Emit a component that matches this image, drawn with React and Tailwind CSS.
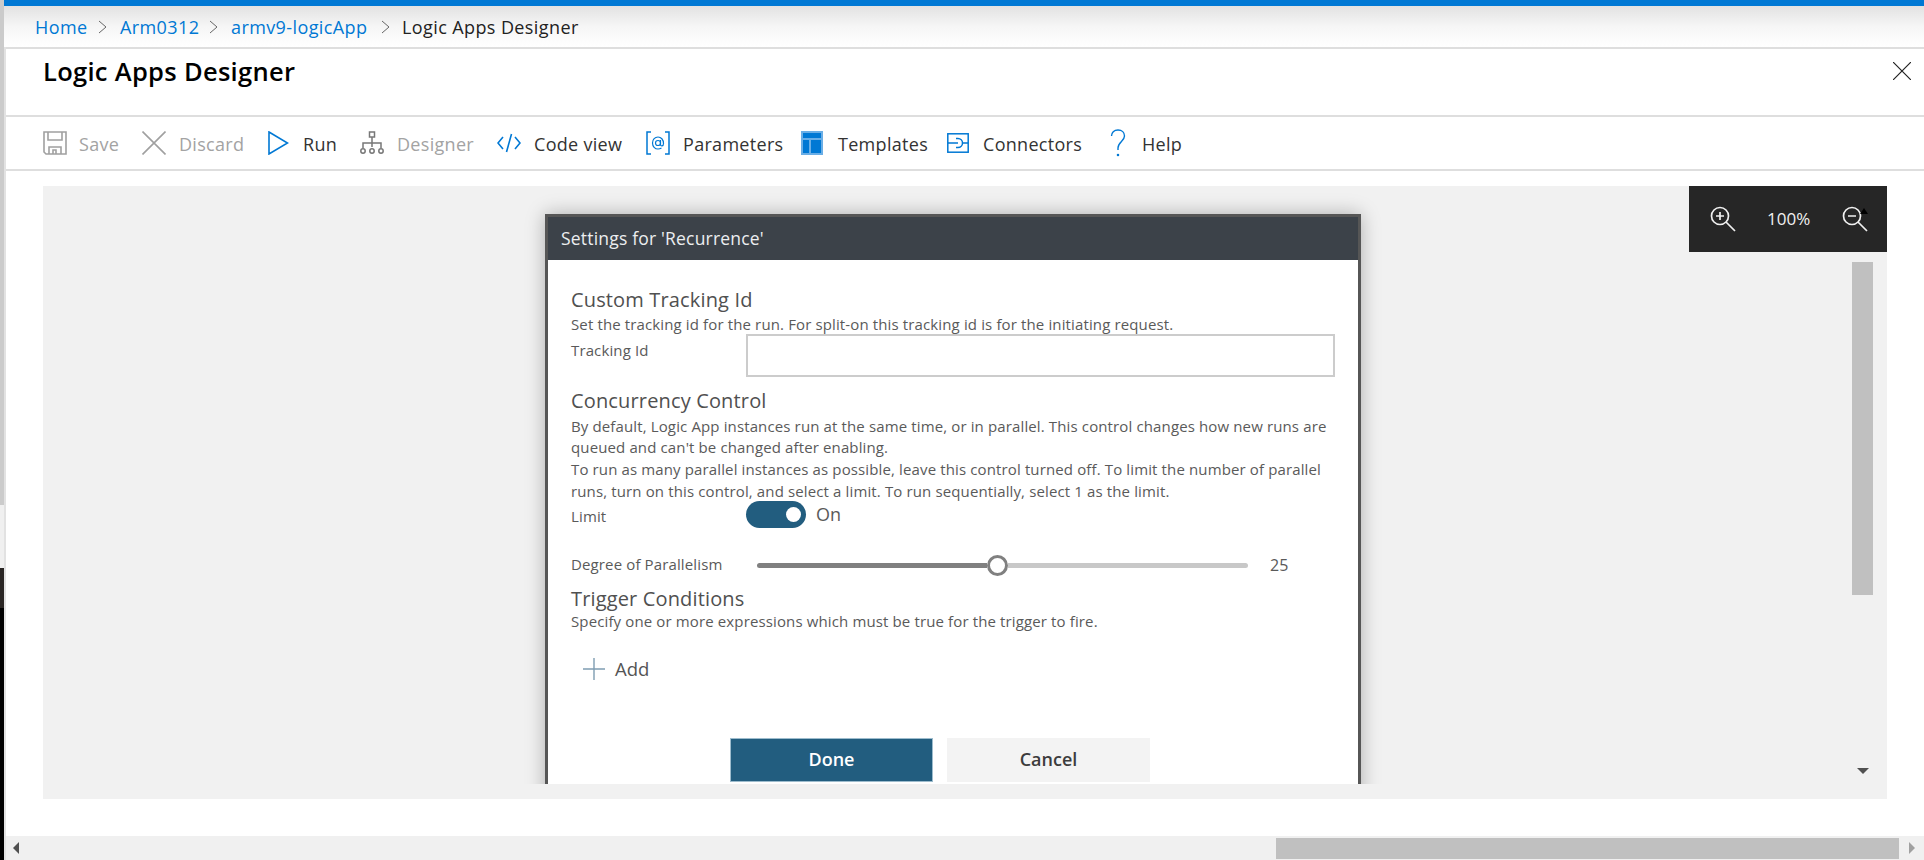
import React from "react";

const font = "font-['Open_Sans','Noto_Sans',sans-serif]";

const Chevron = () => (
  <svg width="9" height="14" viewBox="0 0 9 14" fill="none" stroke="#666" strokeWidth="1">
    <path d="M1 1l7 6-7 6" />
  </svg>
);

const SaveIcon = () => (
  <svg width="24" height="24" viewBox="0 0 24 24" fill="none" stroke="#a0a0a0" strokeWidth="1.6">
    <path d="M1 1h22v22H3l-2-2z" />
    <path d="M5 1v8h14V1M6 23v-7h12v7M10 23v-4h3v4" />
  </svg>
);

const DiscardIcon = () => (
  <svg width="24" height="24" viewBox="0 0 24 24" fill="none" stroke="#a0a0a0" strokeWidth="1.6">
    <path d="M0.5 0.5l23 23M23.500 0.5l-23 23" />
  </svg>
);

const RunIcon = () => (
  <svg width="21" height="24" viewBox="0 0 21 24" fill="none" stroke="#0078d4" strokeWidth="1.6">
    <path d="M1 1l18.500 11L1 23z" />
  </svg>
);

const DesignerIcon = () => (
  <svg width="24" height="24" viewBox="0 0 24 24" fill="none" stroke="#777" strokeWidth="1.500">
    <rect x="9.500" y="1" width="5" height="5" />
    <path d="M12 6v10M3 17v-5h18v5" />
    <circle cx="3" cy="20" r="2.200" />
    <circle cx="12" cy="20" r="2.200" />
    <circle cx="21" cy="20" r="2.200" />
  </svg>
);

const CodeIcon = () => (
  <svg width="24" height="24" viewBox="0 0 24 24" fill="none" stroke="#0078d4" strokeWidth="1.600">
    <path d="M6 6l-5 6 5 6M18 6l5 6-5 6M14.500 3l-5 18" />
  </svg>
);

const ParamsIcon = () => (
  <svg width="24" height="24" viewBox="0 0 24 24" fill="none" stroke="#0078d4" strokeWidth="1.500">
    <path d="M5 1H1v22h4M19 1h4v22h-4" />
    <circle cx="12" cy="12" r="2.500" strokeWidth="1.200" />
    <path d="M14.500 9v4.500c0 2 3 2 3-1 0-4-2.500-6.500-5.500-6.500s-5.500 2.500-5.500 6 2.500 6 5.500 6c1.500 0 2.500-.4 3.500-1" strokeWidth="1.200" />
  </svg>
);

const TemplatesIcon = () => (
  <svg width="22" height="24" viewBox="0 0 22 24">
    <rect x="0" y="0" width="22" height="24" fill="#6aaee6" />
    <rect x="2" y="2" width="18" height="5" fill="#0078d4" />
    <rect x="2" y="9" width="6" height="13" fill="#0078d4" />
    <rect x="10" y="9" width="10" height="13" fill="#0078d4" />
  </svg>
);

const ConnectorsIcon = () => (
  <svg width="22" height="20" viewBox="0 0 22 20" fill="none" stroke="#0078d4" strokeWidth="1.500">
    <rect x="0.800" y="0.800" width="20.400" height="18.400" />
    <path d="M1 10h10M9 5.500h2a4.500 4.500 0 0 1 0 9H9M21 10h-5.500" />
  </svg>
);

const HelpIcon = () => (
  <svg width="16" height="28" viewBox="0 0 16 28" fill="none" stroke="#0078d4" strokeWidth="1.400">
    <path d="M1.500 7C1.500 3.500 4 1 8 1s6.500 2.500 6.500 6c0 5-6.500 6-6.500 12v2" />
    <circle cx="8" cy="26" r="0.600" fill="#0078d4" />
  </svg>
);

const ZoomIcon = ({ minus }) => (
  <svg width="26" height="26" viewBox="0 0 26 26" fill="none" stroke="#f0f0f0" strokeWidth="1.700">
    <circle cx="10" cy="10" r="8.500" />
    <path d="M16 16l9 9M6 10h8" />
    {!minus && <path d="M10 6v8" />}
  </svg>
);

const tools = [
  { icon: <SaveIcon />, label: "Save", off: true, w: "w-[37px]", gap: "mr-[26px]", iconGap: "mr-[12px]" },
  { icon: <DiscardIcon />, label: "Discard", off: true, w: "w-[62px]", gap: "mr-[27px]", iconGap: "mr-[13px]" },
  { icon: <RunIcon />, label: "Run", w: "w-[33px]", gap: "mr-[24px]", iconGap: "mr-[14px]" },
  { icon: <DesignerIcon />, label: "Designer", off: true, w: "w-[75px]", gap: "mr-[25px]", iconGap: "mr-[13px]" },
  { icon: <CodeIcon />, label: "Code view", w: "w-[88px]", gap: "mr-[24px]", iconGap: "mr-[13px]" },
  { icon: <ParamsIcon />, label: "Parameters", w: "w-[94px]", gap: "mr-[24px]", iconGap: "mr-[13px]" },
  { icon: <TemplatesIcon />, label: "Templates", w: "w-[85px]", gap: "mr-[24px]", iconGap: "mr-[15px]" },
  { icon: <ConnectorsIcon />, label: "Connectors", w: "w-[98px]", gap: "mr-[29px]", iconGap: "mr-[14px]" },
  { icon: <HelpIcon />, label: "Help", w: "w-[39px]", gap: "", iconGap: "mr-[16px]" },
];

const SectionTitle = ({ children, className = "" }) => (
  <div className={`text-[20px] leading-[28px] mb-[-2px] tracking-[0.15px] text-[#505050] ${className}`}>{children}</div>
);

const Small = ({ children, className = "" }) => (
  <div className={`text-[15px] leading-[21.500px] tracking-[0.13px] text-[#5a5a5a] whitespace-nowrap ${className}`}>
    {children}
  </div>
);

export default function App() {
  return (
    <div className={`w-[1924px] h-[860px] overflow-hidden flex bg-white ${font}`}>
      {/* left edge of the window behind */}
      <div className="w-[4px] h-full flex flex-col shrink-0">
        <div className="h-[505px] bg-[#cbcbcb]" />
        <div className="h-[63px] bg-[#f0f0f0]" />
        <div className="h-[40px] bg-[#2a2624]" />
        <div className="flex-1 bg-black" />
      </div>

      <div className="flex-1 flex flex-col min-w-0">
        <div className="h-[6px] bg-[#0078d4] shrink-0" />

        {/* breadcrumb */}
        <div className="h-[41px] shrink-0 flex items-center pl-[31px] pt-[1px] text-[18px] tracking-[0.4px] bg-gradient-to-b from-[#e2e2e2] via-[#f6f6f6] to-white whitespace-nowrap">
          <span className="text-[#0078d4] w-[51px]">Home</span>
          <span className="ml-[12px] mr-[13px]"><Chevron /></span>
          <span className="text-[#0078d4] w-[77px]">Arm0312</span>
          <span className="ml-[12px] mr-[13px]"><Chevron /></span>
          <span className="text-[#0078d4] w-[137px]">armv9-logicApp</span>
          <span className="ml-[13px] mr-[12px]"><Chevron /></span>
          <span className="text-[#222]">Logic Apps Designer</span>
        </div>

        <div className="flex-1 flex flex-col border-l-2 border-[#e2e2e2] min-h-0">
          {/* title */}
          <div className="h-[68px] shrink-0 border-t-2 border-[#dedede] flex items-start justify-between pl-[37px] pr-[13px]">
            <div className="text-[25.500px] leading-[44px] font-semibold tracking-[0.3px] text-black">Logic Apps Designer</div>
            <svg className="mt-[13px]" width="18" height="18" viewBox="0 0 18 18" stroke="#222" strokeWidth="1.200">
              <path d="M0 0l18 18M18 0L0 18" />
            </svg>
          </div>

          {/* toolbar */}
          <div className="h-[54px] shrink-0 border-t-2 border-[#dedede] flex items-center pl-[37px] text-[18px] tracking-[0.3px] whitespace-nowrap">
            {tools.map((t) => (
              <div key={t.label} className={`flex items-center ${t.gap}`}>
                <span className={t.iconGap}>{t.icon}</span>
                <span className={`${t.w} pt-[2px] ${t.off ? "text-[#a3a3a3]" : "text-[#333]"}`}>{t.label}</span>
              </div>
            ))}
          </div>

          {/* designer panel */}
          <div className="border-t-2 border-[#dedede] pt-[15px] pl-[37px] pr-[37px] shrink-0">
            <div className="relative h-[613px] bg-[#f1f1f1] pb-[15px]">
              <div className="absolute right-0 top-0 w-[198px] h-[66px] bg-[#262626] z-10 flex items-center pl-[21px] text-[17px] text-[#f0f0f0]">
                <ZoomIcon />
                <span className="ml-[31px] mr-[31px] w-[44px]">100%</span>
                <div className="relative">
                  <ZoomIcon minus />
                  <div className="absolute top-[2px] right-0 border-x-[4px] border-b-[6px] border-x-transparent border-b-black" />
                </div>
              </div>

              <div className="h-full flex overflow-hidden">
                <div className="flex-1 pl-[502px] pt-[28px]">
                  <div className="w-[816px] border-[3px] border-b-0 border-[#565656] bg-white shadow-[0_0_18px_rgba(0,0,0,0.28)]">
                    <div className="h-[43px] bg-[#3c4249] text-[#eceef0] text-[17.500px] leading-[43px] tracking-[0.19px] pl-[13px]">
                      Settings for 'Recurrence'
                    </div>
                    <div className="pl-[23px] pr-[23px] pt-[26px] h-[560px]">
                      <SectionTitle>Custom Tracking Id</SectionTitle>
                      <Small className="leading-[20px] mt-[2px]">Set the tracking id for the run. For split-on this tracking id is for the initiating request.</Small>
                      <div className="flex">
                        <Small className="w-[176px] mt-[4px]">Tracking Id</Small>
                        <div className="w-[591px] h-[43px] border-2 border-[#cccccc] mt-[-2px]" />
                      </div>
                      <SectionTitle className="mt-[10px]">Concurrency Control</SectionTitle>
                      <Small className="leading-[21px] mt-[3px]">
                        By default, Logic App instances run at the same time, or in parallel. This control changes how new runs are
                      </Small>
                      <Small className="leading-[19px]">queued and can't be changed after enabling.</Small>
                      <Small className="leading-[22px]">
                        To run as many parallel instances as possible, leave this control turned off. To limit the number of parallel
                      </Small>
                      <Small className="leading-[22px]">
                        runs, turn on this control, and select a limit. To run sequentially, select 1 as the limit.
                      </Small>
                      <div className="flex items-start mt-[-1px]">
                        <Small className="w-[175px] mt-[5px]">Limit</Small>
                        <div className="w-[60px] h-[27px] rounded-full bg-[#225d7f] flex items-center justify-end pr-[5px]">
                          <div className="w-[15px] h-[15px] rounded-full bg-white" />
                        </div>
                        <span className="ml-[10px] text-[18px] leading-[27px] text-[#5a5a5a]">On</span>
                      </div>
                      <div className="flex items-center mt-[24px] h-[26px]">
                        <Small className="w-[186px]">Degree of Parallelism</Small>
                        <div className="flex items-center w-[491px]">
                          <div className="w-[230px] h-[5px] rounded-l-full bg-[#808080]" />
                          <div className="w-[21px] h-[21px] rounded-full bg-white border-[3px] border-[#808080] shrink-0" />
                          <div className="flex-1 h-[5px] rounded-r-full bg-[#c8c8c8]" />
                        </div>
                        <span className="ml-[22px] text-[16px] text-[#5a5a5a]">25</span>
                      </div>
                      <SectionTitle className="mt-[7px]">Trigger Conditions</SectionTitle>
                      <Small className="leading-[21px]">Specify one or more expressions which must be true for the trigger to fire.</Small>
                      <div className="flex items-center mt-[23px] ml-[12px] text-[18.500px] text-[#555]">
                        <svg width="22" height="22" viewBox="0 0 22 22" stroke="#7f9db2" strokeWidth="1.400">
                          <path d="M11 0v22M0 11h22" />
                        </svg>
                        <span className="ml-[10px]">Add</span>
                      </div>
                      <div className="flex gap-[14px] mt-[55px] ml-[159px]">
                        <div className="w-[203px] h-[44px] bg-[#225d7f] border border-[#9dbccd] text-white font-semibold text-[18px] flex items-center justify-center">
                          Done
                        </div>
                        <div className="w-[203px] h-[44px] bg-[#f3f3f3] text-[#3c3c3c] font-semibold text-[18px] flex items-center justify-center">
                          Cancel
                        </div>
                      </div>
                    </div>
                  </div>
                </div>
                {/* vertical scrollbar of the canvas */}
                <div className="w-[35px] shrink-0 pt-[76px] flex flex-col">
                  <div className="w-[21px] h-[333px] bg-[#c0c0c0]" />
                  <div className="mt-[173px] ml-[5px] w-0 h-0 border-x-[6px] border-t-[6px] border-x-transparent border-t-[#505050]" />
                </div>
              </div>
            </div>
          </div>

          <div className="flex-1" />

          {/* page scrollbar */}
          <div className="h-[24px] shrink-0 bg-[#f0f0f0] flex items-center relative">
            <div className="ml-[7px] w-0 h-0 border-y-[6px] border-r-[6px] border-y-transparent border-r-[#505050]" />
            <div className="ml-[1257px] w-[623px] h-[21px] bg-[#c0c0c0]" />
            <div className="ml-[10px] w-0 h-0 border-y-[6px] border-l-[6px] border-y-transparent border-l-[#a0a0a0]" />
          </div>
        </div>
      </div>
    </div>
  );
}
